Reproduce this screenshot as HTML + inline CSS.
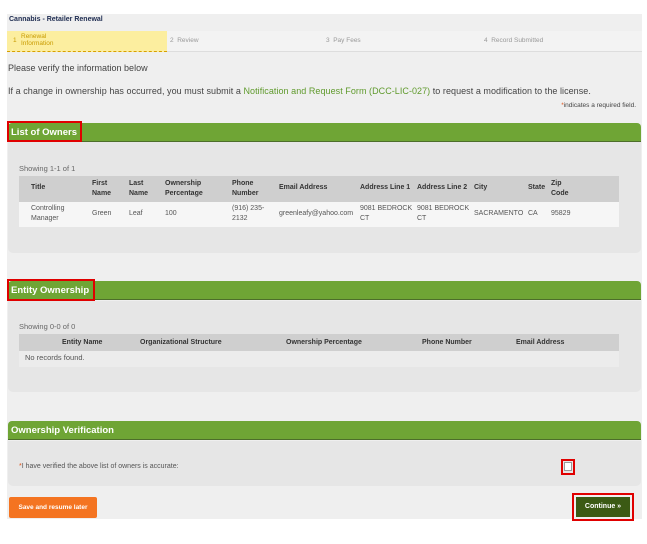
<!DOCTYPE html>
<html><head><meta charset="utf-8"><style>
*{margin:0;padding:0;box-sizing:border-box}
body{width:647px;height:544px;background:#fff;font-family:"Liberation Sans",sans-serif;position:relative;overflow:hidden}
.a{position:absolute;white-space:nowrap}
.bg{left:7px;top:14px;width:635px;height:505px;background:#efefef}
.hd{left:8px;width:633px;height:19px;background:#6fa535;border-radius:4px 4px 0 0;border-bottom:1px solid #4d6e2a;color:#fff;font-weight:bold;font-size:9.5px;padding:4px 0 0 3px}
.pn{left:8px;width:633px;background:#e6e6e6;border-radius:0 0 5px 5px}
.rb{border:2px solid #e00000}
.th{font-size:7px;font-weight:bold;color:#333;line-height:10px}
.td{font-size:7px;color:#555;line-height:10px}
</style></head><body>
<div class="a bg"></div>
<div class="a" style="left:9px;top:16px;font-size:7px;font-weight:bold;color:#1d2b50">Cannabis - Retailer Renewal</div>
<div class="a" style="left:7px;top:31px;width:635px;height:21px;background:#f3f3f3;border-bottom:1px solid #ddd"></div>
<div class="a" style="left:7px;top:31px;width:160px;height:21px;background:#fcee9f;border-bottom:1px dashed #d8a000"></div>
<div class="a" style="left:13px;top:37px;font-size:6.5px;color:#c89b00">1</div>
<div class="a" style="left:21px;top:33px;font-size:6.5px;color:#c89b00;line-height:7px">Renewal<br>Information</div>
<div class="a" style="left:170px;top:37px;font-size:6.5px;color:#999">2&nbsp; Review</div>
<div class="a" style="left:326px;top:37px;font-size:6.5px;color:#999">3&nbsp; Pay Fees</div>
<div class="a" style="left:484px;top:37px;font-size:6.5px;color:#999">4&nbsp; Record Submitted</div>
<div class="a" style="left:8px;top:63px;font-size:9px;color:#444">Please verify the information below</div>
<div class="a" style="left:8px;top:86px;font-size:9px;color:#444;letter-spacing:0.05px">If a change in ownership has occurred, you must submit a <span style="color:#5f9a2c">Notification and Request Form (DCC-LIC-027)</span> to request a modification to the license.</div>
<div class="a" style="right:11px;top:102px;font-size:6.5px;color:#444"><span style="color:#e0541a">*</span>indicates a required field.</div>

<div class="a hd" style="top:123px">List of Owners</div>
<div class="a rb" style="left:7px;top:121px;width:75px;height:21px"></div>
<div class="a pn" style="top:142px;height:111px"></div>
<div class="a" style="left:19px;top:164px;font-size:7.5px;color:#666">Showing 1-1 of 1</div>
<div class="a" style="left:19px;top:176px;width:600px;height:26px;background:#cfcfcf"></div>
<div class="a" style="left:19px;top:202px;width:600px;height:25px;background:#f6f6f6"></div>
<div class="a th" style="left:31px;top:183px">Title</div>
<div class="a th" style="left:92px;top:179px">First<br>Name</div>
<div class="a th" style="left:129px;top:179px">Last<br>Name</div>
<div class="a th" style="left:165px;top:179px">Ownership<br>Percentage</div>
<div class="a th" style="left:232px;top:179px">Phone<br>Number</div>
<div class="a th" style="left:279px;top:183px">Email Address</div>
<div class="a th" style="left:360px;top:183px">Address Line 1</div>
<div class="a th" style="left:417px;top:183px">Address Line 2</div>
<div class="a th" style="left:474px;top:183px">City</div>
<div class="a th" style="left:528px;top:183px">State</div>
<div class="a th" style="left:551px;top:179px">Zip<br>Code</div>
<div class="a td" style="left:31px;top:204px">Controlling<br>Manager</div>
<div class="a td" style="left:92px;top:209px">Green</div>
<div class="a td" style="left:129px;top:209px">Leaf</div>
<div class="a td" style="left:165px;top:209px">100</div>
<div class="a td" style="left:232px;top:204px">(916) 235-<br>2132</div>
<div class="a td" style="left:279px;top:209px">greenleafy@yahoo.com</div>
<div class="a td" style="left:360px;top:204px">9081 BEDROCK<br>CT</div>
<div class="a td" style="left:417px;top:204px">9081 BEDROCK<br>CT</div>
<div class="a td" style="left:474px;top:209px">SACRAMENTO</div>
<div class="a td" style="left:528px;top:209px">CA</div>
<div class="a td" style="left:551px;top:209px">95829</div>

<div class="a hd" style="top:281px">Entity Ownership</div>
<div class="a rb" style="left:7px;top:279px;width:88px;height:22px"></div>
<div class="a pn" style="top:301px;height:91px"></div>
<div class="a" style="left:19px;top:322px;font-size:7.5px;color:#666">Showing 0-0 of 0</div>
<div class="a" style="left:19px;top:334px;width:600px;height:17px;background:#cfcfcf"></div>
<div class="a" style="left:19px;top:351px;width:600px;height:16px;background:#ececec"></div>
<div class="a th" style="left:62px;top:338px">Entity Name</div>
<div class="a th" style="left:140px;top:338px">Organizational Structure</div>
<div class="a th" style="left:286px;top:338px">Ownership Percentage</div>
<div class="a th" style="left:422px;top:338px">Phone Number</div>
<div class="a th" style="left:516px;top:338px">Email Address</div>
<div class="a td" style="left:25px;top:353px;font-size:7.5px">No records found.</div>

<div class="a hd" style="top:421px">Ownership Verification</div>
<div class="a pn" style="top:441px;height:45px"></div>
<div class="a td" style="left:19px;top:462px"><span style="color:#e0541a">*</span>I have verified the above list of owners is accurate:</div>
<div class="a rb" style="left:561px;top:459px;width:14px;height:16px"></div>
<div class="a" style="left:564px;top:462px;width:8px;height:9px;background:#fff;border:1px solid #999"></div>

<div class="a" style="left:9px;top:497px;width:88px;height:21px;background:#f47421;border-radius:2px;color:#fff;font-size:6.5px;font-weight:bold;text-align:center;line-height:21px">Save and resume later</div>
<div class="a rb" style="left:572px;top:493px;width:62px;height:28px"></div>
<div class="a" style="left:576px;top:497px;width:54px;height:20px;background:#3b5a14;color:#fff;font-size:7px;font-weight:bold;text-align:center;line-height:20px">Continue »</div>
</body></html>
